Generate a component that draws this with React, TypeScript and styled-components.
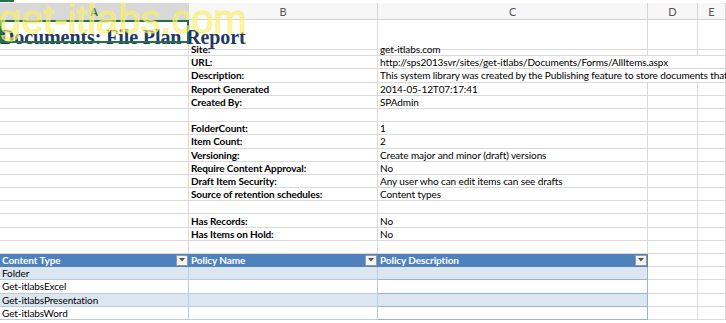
import React, { FC } from "react";
import styled, { createGlobalStyle, css } from "styled-components";

const GlobalStyle = createGlobalStyle`
  html, body {
    margin: 0;
    padding: 0;
    background: #ffffff;
    overflow: hidden;
  }
`;

const Sheet = styled.div`
  position: relative;
  width: 726px;
  height: 323px;
  overflow: hidden;
  background: #ffffff;
  font-family: Lato, "Liberation Sans", sans-serif;
  font-size: 10px;
  letter-spacing: -0.1px;
  color: #000000;
`;

const TopStrip = styled.div`
  height: 3px;
  display: flex;
  align-items: flex-start;
`;

const GreenMark = styled.div`
  width: 14px;
  height: 2px;
  background: #217346;
`;

const Row = styled.div<{ $h: number }>`
  display: grid;
  grid-template-columns: 189px 189px 270px 50px 1fr;
  height: ${(p) => p.$h}px;
`;

const ColHead = styled.div<{ $active?: boolean }>`
  display: flex;
  align-items: center;
  justify-content: center;
  box-sizing: border-box;
  border-right: 1px solid #d4d4d4;
  border-bottom: 1px solid #d4d4d4;
  background: ${(p) => (p.$active ? "#d8d8d8" : "#f7f7f7")};
  color: ${(p) => (p.$active ? "#217346" : "#555555")};
  font-size: 11px;
  font-weight: ${(p) => (p.$active ? "bold" : "normal")};
`;

const Cell = styled.div<{
  $bold?: boolean;
  $span?: boolean;
  $fill?: string;
  $line?: string;
}>`
  box-sizing: border-box;
  display: flex;
  align-items: center;
  justify-content: space-between;
  padding: 0 2px;
  white-space: nowrap;
  overflow: hidden;
  border-right: 1px solid ${(p) => p.$line || "#dadada"};
  border-bottom: 1px solid ${(p) => p.$line || "#dadada"};
  background: ${(p) => p.$fill || "transparent"};
  font-weight: ${(p) => (p.$bold ? "bold" : "normal")};
  ${(p) =>
    p.$span &&
    css`
      grid-column: 3 / -1;
      overflow: visible;
    `}
`;

const TitleCell = styled(Cell)`
  position: relative;
  overflow: visible;
  padding: 0;
  border-right: none;
`;

const Title = styled.span`
  font-family: "Liberation Serif", "DejaVu Serif", serif;
  font-weight: bold;
  font-size: 20px;
  color: #1f3864;
  letter-spacing: -0.1px;
  margin-top: 6px;
`;

const Selection = styled.div`
  position: absolute;
  left: 0;
  top: 0;
  width: 189px;
  height: 23px;
  box-sizing: border-box;
  border: 2px solid #217346;
  pointer-events: none;
`;

const HeadCell = styled(Cell)`
  background: #4f81bd;
  color: #ffffff;
  font-weight: bold;
  border-bottom: 1px solid #4f81bd;
  border-right: none;
  padding-right: 1px;
`;

const DropButton = styled.span`
  display: inline-flex;
  align-items: center;
  justify-content: center;
  width: 12px;
  height: 11px;
  box-sizing: border-box;
  background: #f4f4f4;
  border: 1px solid #9a9a9a;
`;

const Watermark = styled.div`
  position: absolute;
  left: -1px;
  top: -3px;
  font-family: "Liberation Sans", Arial, sans-serif;
  font-size: 40px;
  color: rgba(248, 240, 110, 0.62);
  -webkit-text-stroke: 1.3px rgba(248, 240, 110, 0.62);
  pointer-events: none;
`;

const Arrow: FC = () => (
  <DropButton>
    <svg width="6" height="4" viewBox="0 0 6 4">
      <path d="M0 0 L6 0 L3 3.5 Z" fill="#555555" />
    </svg>
  </DropButton>
);

const info: ([string, string, boolean?] | null)[] = [
  ["Site:", "get-itlabs.com"],
  ["URL:", "http://sps2013svr/sites/get-itlabs/Documents/Forms/AllItems.aspx", true],
  [
    "Description:",
    "This system library was created by the Publishing feature to store documents that are used on pages in this site.",
    true,
  ],
  ["Report Generated", "2014-05-12T07:17:41"],
  ["Created By:", "SPAdmin"],
  null,
  ["FolderCount:", "1"],
  ["Item Count:", "2"],
  ["Versioning:", "Create major and minor (draft) versions"],
  ["Require Content Approval:", "No"],
  ["Draft Item Security:", "Any user who can edit items can see drafts"],
  ["Source of retention schedules:", "Content types"],
  null,
  ["Has Records:", "No"],
  ["Has Items on Hold:", "No"],
  null,
];

const contentTypes = ["Folder", "Get-itlabsExcel", "Get-itlabsPresentation", "Get-itlabsWord"];

const ROW_H = 13.2;

const App: FC = () => {
  return (
    <Sheet>
      <GlobalStyle />
      <TopStrip>
        <GreenMark />
      </TopStrip>
      <Row $h={17}>
        <ColHead $active>A</ColHead>
        <ColHead>B</ColHead>
        <ColHead>C</ColHead>
        <ColHead>D</ColHead>
        <ColHead>E</ColHead>
      </Row>
      <Row $h={23}>
        <TitleCell>
          <Title>Documents: File Plan Report</Title>
          <Selection />
        </TitleCell>
        <Cell />
        <Cell />
        <Cell />
        <Cell />
      </Row>
      {info.map((item, i) => (
        <Row $h={ROW_H} key={i}>
          <Cell />
          <Cell $bold>{item ? item[0] : ""}</Cell>
          {item && item[2] ? (
            <Cell $span>{item[1]}</Cell>
          ) : (
            <>
              <Cell>{item ? item[1] : ""}</Cell>
              <Cell />
              <Cell />
            </>
          )}
        </Row>
      ))}
      <Row $h={ROW_H}>
        <HeadCell>
          Content Type
          <Arrow />
        </HeadCell>
        <HeadCell>
          Policy Name
          <Arrow />
        </HeadCell>
        <HeadCell>
          Policy Description
          <Arrow />
        </HeadCell>
        <Cell />
        <Cell />
      </Row>
      {contentTypes.map((name, i) => {
        const fill = i % 2 === 0 ? "#dce6f1" : "#ffffff";
        return (
          <Row $h={ROW_H} key={name}>
            <Cell $fill={fill} $line="#b8cce4">
              {name}
            </Cell>
            <Cell $fill={fill} $line="#b8cce4" />
            <Cell $fill={fill} $line="#95b3d7" />
            <Cell />
            <Cell />
          </Row>
        );
      })}
      <Watermark>get-itlabs.com</Watermark>
    </Sheet>
  );
};

export default App;
